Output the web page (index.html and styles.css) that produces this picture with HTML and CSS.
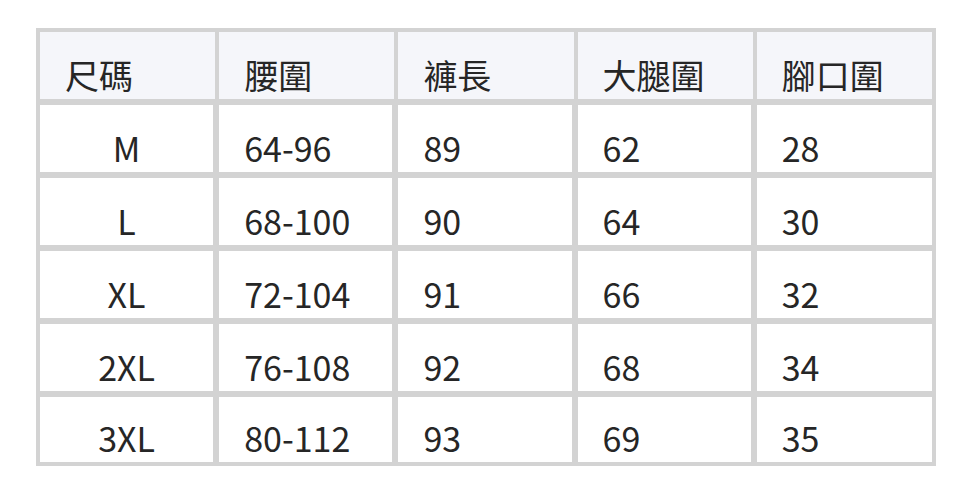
FILE: index.html
```html
<!DOCTYPE html>
<html lang="zh-Hant">
<head>
<meta charset="utf-8">
<title>尺碼表</title>
<link rel="stylesheet" href="styles.css">
</head>
<body>
<table class="size-table">
  <thead>
    <tr class="head-row">
      <th>尺碼</th>
      <th>腰圍</th>
      <th>褲長</th>
      <th>大腿圍</th>
      <th>腳口圍</th>
    </tr>
  </thead>
  <tbody>
    <tr class="body-row">
      <td class="size">M</td><td>64-96</td><td>89</td><td>62</td><td>28</td>
    </tr>
    <tr class="body-row">
      <td class="size">L</td><td>68-100</td><td>90</td><td>64</td><td>30</td>
    </tr>
    <tr class="body-row">
      <td class="size">XL</td><td>72-104</td><td>91</td><td>66</td><td>32</td>
    </tr>
    <tr class="body-row">
      <td class="size">2XL</td><td>76-108</td><td>92</td><td>68</td><td>34</td>
    </tr>
    <tr class="body-row last">
      <td class="size">3XL</td><td>80-112</td><td>93</td><td>69</td><td>35</td>
    </tr>
  </tbody>
</table>
</body>
</html>
```

FILE: styles.css
```css
html, body {
  margin: 0;
  padding: 0;
  background: #ffffff;
}

body {
  font-family: "Noto Sans CJK TC", "Noto Sans", sans-serif;
  color: #262626;
}

.size-table {
  margin: 28px 0 0 36px;
  width: 900px;
  table-layout: fixed;
  border-collapse: separate;
  border-spacing: 0;
  border-top: 4px solid #d3d3d3;
  border-left: 4px solid #d3d3d3;
}

.size-table th,
.size-table td {
  font-size: 34px;
  line-height: 38px;
  font-weight: 400;
  text-align: left;
  vertical-align: bottom;
  padding: 0 0 5px 25px;
  white-space: nowrap;
}

.head-row th {
  height: 62px;
  padding-bottom: 5px;
  background: #f5f6fa;
  border-right: 4px solid #d3d3d3;
  border-bottom: 6px solid #d3d3d3;
}

.body-row td {
  height: 62px;
  border-right: 6px solid #d3d3d3;
  border-bottom: 6px solid #d3d3d3;
}

.body-row td:last-child {
  border-right: 4px solid #d3d3d3;
}

.body-row.last td {
  height: 60px;
  border-bottom: 4px solid #d3d3d3;
}

.body-row td.size {
  text-align: center;
  padding-left: 0;
}
```
